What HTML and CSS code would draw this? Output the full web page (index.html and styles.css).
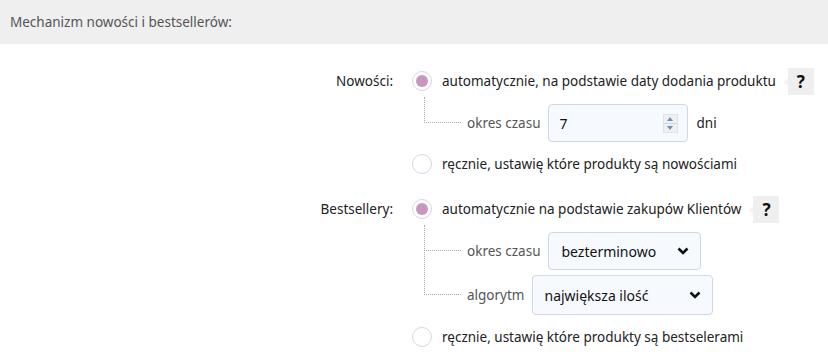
FILE: index.html
```html
<!DOCTYPE html>
<html>
<head>
  <title>Mechanizm nowości i bestsellerów</title>
  <meta charset="utf-8">
  <link rel="stylesheet" href="styles.css">
</head>
<body>
  <div class="panel">
    <div class="panel-head">Mechanizm nowości i bestsellerów:</div>

    <div class="panel-body">
      <div class="field">
        <div class="field-label">Nowości:</div>
        <div class="field-options">
          <label class="opt">
            <span class="radio checked"></span>
            <span class="opt-text">automatycznie, na podstawie daty dodania produktu</span>
            <span class="help">?</span>
          </label>
          <div class="sub">
            <span class="sub-label">okres czasu</span>
            <span class="num-input">
              <span class="num-value">7</span>
              <span class="spinner"><i class="up"></i><i class="down"></i></span>
            </span>
            <span class="unit">dni</span>
          </div>
          <label class="opt">
            <span class="radio"></span>
            <span class="opt-text">ręcznie, ustawię które produkty są nowościami</span>
          </label>
        </div>
      </div>

      <div class="field">
        <div class="field-label">Bestsellery:</div>
        <div class="field-options">
          <label class="opt">
            <span class="radio checked"></span>
            <span class="opt-text">automatycznie na podstawie zakupów Klientów</span>
            <span class="help">?</span>
          </label>
          <div class="sub">
            <span class="sub-label">okres czasu</span>
            <span class="select select-period">
              <span>bezterminowo</span>
              <svg class="chev" width="12" height="8" viewBox="0 0 12 8"><polyline points="1.5,1.5 6,6 10.5,1.5" fill="none" stroke="#111" stroke-width="2.6"/></svg>
            </span>
          </div>
          <div class="sub sub-tight">
            <span class="sub-label">algorytm</span>
            <span class="select select-algo">
              <span>największa ilość</span>
              <svg class="chev" width="12" height="8" viewBox="0 0 12 8"><polyline points="1.5,1.5 6,6 10.5,1.5" fill="none" stroke="#111" stroke-width="2.6"/></svg>
            </span>
          </div>
          <label class="opt">
            <span class="radio"></span>
            <span class="opt-text">ręcznie, ustawię które produkty są bestselerami</span>
          </label>
        </div>
      </div>
    </div>
  </div>
</body>
</html>
```

FILE: styles.css
```css
body {
  margin: 0;
  background: #fff;
  font-family: "Noto Sans", "Open Sans", sans-serif;
  font-size: 13.5px;
  color: #222;
}

.panel-head {
  height: 44px;
  line-height: 44px;
  padding-left: 10px;
  background: #efefef;
  color: #555;
}

.panel-body {
  padding-top: 23px;
}

.field {
  display: grid;
  grid-template-columns: 393px 1fr;
  column-gap: 19px;
  margin-bottom: 17px;
}

.field-label {
  text-align: right;
  line-height: 28px;
  height: 28px;
}

.field-options {
  display: flex;
  flex-direction: column;
}

.opt {
  display: flex;
  align-items: center;
  height: 28px;
}

.radio {
  width: 18px;
  height: 18px;
  border: 1px solid #d0d8e4;
  border-radius: 50%;
  background: #fff;
  display: flex;
  align-items: center;
  justify-content: center;
  flex: none;
}

.radio.checked::after {
  content: "";
  width: 12px;
  height: 12px;
  border-radius: 50%;
  background: #c897bf;
}

.opt-text {
  margin-left: 10px;
}

.help {
  position: relative;
  margin-left: 12px;
  width: 26px;
  height: 27px;
  line-height: 27px;
  text-align: center;
  background: #efefef;
  color: #111;
  font-weight: bold;
  font-size: 17px;
}

.help::before {
  content: "";
  position: absolute;
  left: -5px;
  top: 10px;
  border-top: 4px solid transparent;
  border-bottom: 4px solid transparent;
  border-right: 5px solid #f4f4f4;
}

.sub {
  position: relative;
  display: flex;
  align-items: center;
  gap: 8px;
  height: 38px;
  margin: 9px 0 8px;
  padding-left: 55px;
}

.sub + .sub {
  margin-top: -3px;
}

.sub.sub-tight {
  height: 40px;
}

.sub::before {
  content: "";
  position: absolute;
  left: 12px;
  bottom: 50%;
  width: 36px;
  height: calc(50% + 6px);
  border-left: 1px dotted #aaa;
  border-bottom: 1px dotted #aaa;
}

.sub + .sub::before {
  height: calc(100% + 4px);
}

.sub-label {
  color: #555;
}

.num-input,
.select {
  display: flex;
  align-items: center;
  height: 36px;
  border: 1px solid #cfd9e6;
  border-radius: 4px;
  background: #f6faff;
  box-sizing: border-box;
}

.num-input {
  width: 140px;
  height: 38px;
  padding: 0 9px 0 10px;
  justify-content: space-between;
  color: #111;
  font-size: 14px;
}

.spinner {
  display: flex;
  flex-direction: column;
  width: 13px;
  border: 1px solid #dfe3e8;
  background: #eef0f3;
}

.spinner i {
  display: block;
  height: 8px;
  position: relative;
}

.spinner i + i {
  border-top: 1px solid #d4d8de;
}

.spinner i::after {
  content: "";
  position: absolute;
  left: 3px;
  top: 2px;
  border-left: 3px solid transparent;
  border-right: 3px solid transparent;
}

.spinner .up::after {
  border-bottom: 4px solid #6f8fc0;
}

.spinner .down::after {
  border-top: 4px solid #6f8fc0;
}

.select {
  justify-content: space-between;
  height: 38px;
  padding: 0 11px 0 12px;
  color: #111;
  font-size: 14px;
}

.select-period {
  width: 153px;
}

.select-algo {
  width: 181px;
  height: 40px;
  padding-left: 11px;
}
```
